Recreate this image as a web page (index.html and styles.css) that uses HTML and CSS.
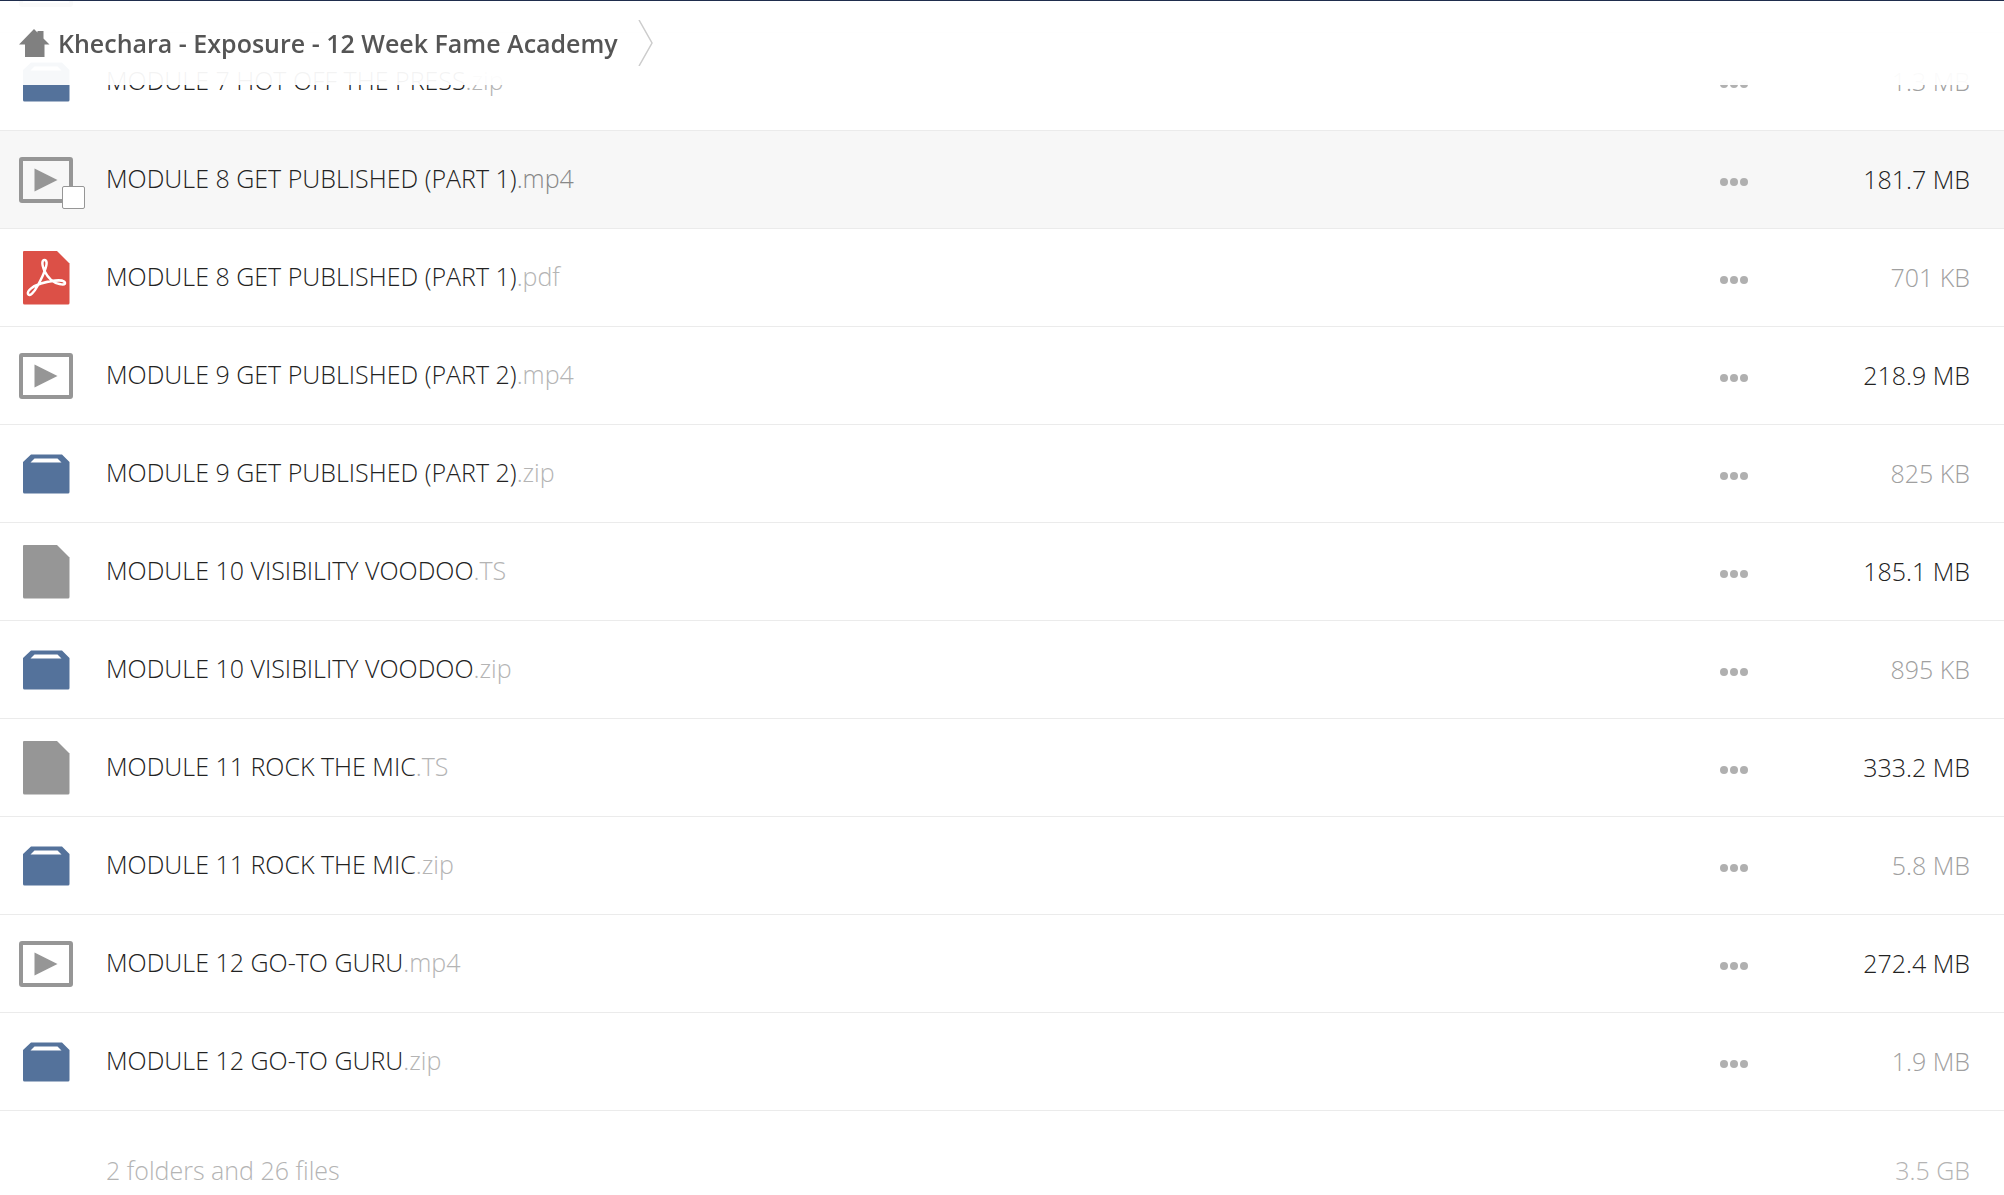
FILE: index.html
```
<!DOCTYPE html>
<html lang="en">
  <head>
    <meta charset="UTF-8" />
    <meta name="viewport" content="width=device-width, initial-scale=1.0" />
    <title>Khechara - Exposure - 12 Week Fame Academy</title>
    <link rel="stylesheet" href="styles.css">
  </head>
  <body>
    <!-- shared file icons -->
    <svg class="sprite" aria-hidden="true">
      <symbol id="icon-video" viewBox="0 0 54 54">
        <rect x="2" y="6" width="50" height="42" rx="1" fill="none" stroke="#969696" stroke-width="4" />
        <path d="M15.500 15.500v23l23-11.500z" fill="#969696" />
      </symbol>
      <symbol id="icon-zip" viewBox="0 0 54 54">
        <path fill="#54729b" fill-rule="evenodd" d="M12 7.500h31l7.500 7.500v30q0 1.500-1.500 1.500H5.500q-1.500 0-1.500-1.500V15zM15.500 11.500l-4 4h31l-4-4z" />
      </symbol>
      <symbol id="icon-doc" viewBox="0 0 54 54">
        <path fill="#969696" d="M5 0h33l12.500 12.500V52q0 1.500-1.500 1.500H5.500Q4 53.500 4 52V1q0-1 1-1z" />
      </symbol>
      <symbol id="icon-pdf" viewBox="0 0 54 54">
        <path fill="#dc5047" d="M5 0h33l12.500 12.500V52q0 1.500-1.500 1.500H5.500Q4 53.500 4 52V1q0-1 1-1z" />
        <path fill="none" stroke="#fff" stroke-width="2.500" stroke-linejoin="round" d="M25.500 20C22 12 23.500 9 25.500 9s3.500 3 0 11c4 8 9 12 15 13 6.500 1.500 6-1 4.500-2.500-3-2-14-.5-23 2-8 2.500-14 7-13 10.500 1.500 3 6-1.500 9.500-8 3-5.500 6-11 7-15z" />
      </symbol>
      <symbol id="icon-dots" viewBox="0 0 28 8">
        <g fill="#b0b0b0">
          <circle cx="4" cy="4" r="4" />
          <circle cx="14" cy="4" r="4" />
          <circle cx="24" cy="4" r="4" />
        </g>
      </symbol>
    </svg>

    <header class="topbar">
      <a class="crumb" href="#">
        <svg class="home" viewBox="0 0 32 28"><path fill="#808080" d="M1 15.500L16 0l3.500 3.500V2h6v7.500l6 6h-5V28H7V15.500z" /></svg>
        <span>Khechara - Exposure - 12 Week Fame Academy</span>
      </a>
      <svg class="chevron" viewBox="0 0 15 46"><path d="M1 0l13 23L1 46" fill="none" stroke="#ccc" stroke-width="1.500" /></svg>
    </header>

    <main class="browser">
      <table class="files">
        <tbody>
          <tr>
            <td class="icon"><svg><use href="#icon-video" /></svg></td>
            <td class="name"></td>
            <td class="more"></td>
            <td class="size"></td>
          </tr>
          <tr>
            <td class="icon"><svg><use href="#icon-zip" /></svg></td>
            <td class="name">MODULE 7 HOT OFF THE PRESS<span class="ext">.zip</span></td>
            <td class="more"><button type="button"><svg><use href="#icon-dots" /></svg></button></td>
            <td class="size">1.3 MB</td>
          </tr>
          <tr class="hovered">
            <td class="icon"><label><svg><use href="#icon-video" /></svg><input type="checkbox" class="pick" /></label></td>
            <td class="name">MODULE 8 GET PUBLISHED (PART 1)<span class="ext">.mp4</span></td>
            <td class="more"><button type="button"><svg><use href="#icon-dots" /></svg></button></td>
            <td class="size large">181.7 MB</td>
          </tr>
          <tr>
            <td class="icon"><svg><use href="#icon-pdf" /></svg></td>
            <td class="name">MODULE 8 GET PUBLISHED (PART 1)<span class="ext">.pdf</span></td>
            <td class="more"><button type="button"><svg><use href="#icon-dots" /></svg></button></td>
            <td class="size">701 KB</td>
          </tr>
          <tr>
            <td class="icon"><svg><use href="#icon-video" /></svg></td>
            <td class="name">MODULE 9 GET PUBLISHED (PART 2)<span class="ext">.mp4</span></td>
            <td class="more"><button type="button"><svg><use href="#icon-dots" /></svg></button></td>
            <td class="size large">218.9 MB</td>
          </tr>
          <tr>
            <td class="icon"><svg><use href="#icon-zip" /></svg></td>
            <td class="name">MODULE 9 GET PUBLISHED (PART 2)<span class="ext">.zip</span></td>
            <td class="more"><button type="button"><svg><use href="#icon-dots" /></svg></button></td>
            <td class="size">825 KB</td>
          </tr>
          <tr>
            <td class="icon"><svg><use href="#icon-doc" /></svg></td>
            <td class="name">MODULE 10 VISIBILITY VOODOO<span class="ext">.TS</span></td>
            <td class="more"><button type="button"><svg><use href="#icon-dots" /></svg></button></td>
            <td class="size large">185.1 MB</td>
          </tr>
          <tr>
            <td class="icon"><svg><use href="#icon-zip" /></svg></td>
            <td class="name">MODULE 10 VISIBILITY VOODOO<span class="ext">.zip</span></td>
            <td class="more"><button type="button"><svg><use href="#icon-dots" /></svg></button></td>
            <td class="size">895 KB</td>
          </tr>
          <tr>
            <td class="icon"><svg><use href="#icon-doc" /></svg></td>
            <td class="name">MODULE 11 ROCK THE MIC<span class="ext">.TS</span></td>
            <td class="more"><button type="button"><svg><use href="#icon-dots" /></svg></button></td>
            <td class="size large">333.2 MB</td>
          </tr>
          <tr>
            <td class="icon"><svg><use href="#icon-zip" /></svg></td>
            <td class="name">MODULE 11 ROCK THE MIC<span class="ext">.zip</span></td>
            <td class="more"><button type="button"><svg><use href="#icon-dots" /></svg></button></td>
            <td class="size">5.8 MB</td>
          </tr>
          <tr>
            <td class="icon"><svg><use href="#icon-video" /></svg></td>
            <td class="name">MODULE 12 GO-TO GURU<span class="ext">.mp4</span></td>
            <td class="more"><button type="button"><svg><use href="#icon-dots" /></svg></button></td>
            <td class="size large">272.4 MB</td>
          </tr>
          <tr>
            <td class="icon"><svg><use href="#icon-zip" /></svg></td>
            <td class="name">MODULE 12 GO-TO GURU<span class="ext">.zip</span></td>
            <td class="more"><button type="button"><svg><use href="#icon-dots" /></svg></button></td>
            <td class="size">1.9 MB</td>
          </tr>
        </tbody>
      </table>
      <footer class="summary">
        <span>2 folders and 26 files</span>
        <span>3.5 GB</span>
      </footer>
    </main>
  </body>
</html>
```
FILE: styles.css
```
* {
  box-sizing: border-box;
}
body {
  margin: 0;
  background: #fff;
  color: #222;
  font-family: "Open Sans", sans-serif;
  font-size: 25px;
  font-weight: 300;
}
.sprite {
  display: none;
}

.topbar {
  position: fixed;
  top: 0;
  left: 0;
  right: 0;
  z-index: 1;
  height: 85px;
  padding: 0 18px;
  display: flex;
  align-items: center;
  gap: 20px;
  border-top: 1px solid #1f2d4d;
  background: rgba(255, 255, 255, 0.95);
}
.crumb {
  display: flex;
  align-items: center;
  gap: 8px;
  color: #555;
  font-weight: 600;
  text-decoration: none;
}
.home {
  width: 32px;
  height: 28px;
}
.chevron {
  width: 15px;
  height: 46px;
}

/* the list is kept scrolled to its end */
.browser {
  height: 100vh;
  overflow: hidden;
  display: flex;
  flex-direction: column;
  justify-content: flex-end;
}
.files {
  width: 100%;
  flex-shrink: 0;
  border-spacing: 0;
}
.files td {
  height: 98px;
  padding: 0;
  border-bottom: 1px solid #ebebeb;
  vertical-align: middle;
}
.hovered {
  background: #f7f7f7;
}
.files .icon {
  width: 106px;
  padding-left: 19px;
}
.icon svg {
  display: block;
  width: 54px;
  height: 54px;
}
.icon label {
  display: block;
  position: relative;
  width: 54px;
}
.pick {
  appearance: none;
  position: absolute;
  right: -12px;
  bottom: -2px;
  width: 23px;
  height: 23px;
  margin: 0;
  border: 1px solid #969696;
  border-radius: 2px;
  background: #fff;
}
.files .name {
  padding-bottom: 4px;
}
.ext {
  color: #b4b4b4;
}
.hovered .ext {
  color: #888;
}
.more {
  width: 60px;
}
.more button {
  display: block;
  padding: 4px 0 0;
  border: 0;
  background: none;
}
.more svg {
  display: block;
  width: 28px;
  height: 8px;
}
.files .size {
  width: 224px;
  padding-right: 34px;
  padding-bottom: 2px;
  color: #a0a0a0;
  text-align: right;
}
.files .large {
  color: #222;
}
.summary {
  flex-shrink: 0;
  display: flex;
  justify-content: space-between;
  padding: 36px 34px 2px 106px;
  color: #b4b4b4;
  line-height: 46px;
}
```
